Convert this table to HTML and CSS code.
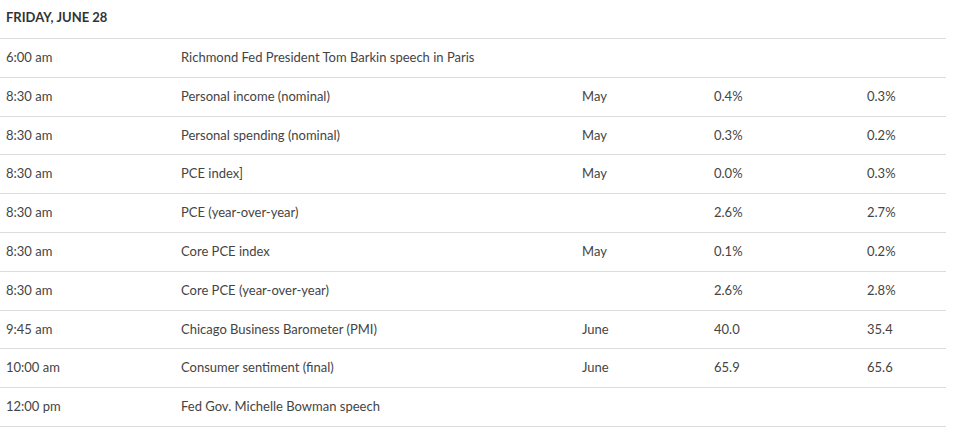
FILE: index.html
```html
<!DOCTYPE html>
<html>
<head>
<meta charset="utf-8">
<link rel="stylesheet" href="styles.css">
</head>
<body>
<div class="calendar">
  <div class="day">FRIDAY, JUNE 28</div>
  <table class="events">
    <tbody>
      <tr><td class="c-time">6:00 am</td><td class="c-event">Richmond Fed President Tom Barkin speech in Paris</td><td class="c-period"></td><td class="c-fc"></td><td class="c-prev"></td></tr>
      <tr><td class="c-time">8:30 am</td><td class="c-event">Personal income (nominal)</td><td class="c-period">May</td><td class="c-fc">0.4%</td><td class="c-prev">0.3%</td></tr>
      <tr><td class="c-time">8:30 am</td><td class="c-event">Personal spending (nominal)</td><td class="c-period">May</td><td class="c-fc">0.3%</td><td class="c-prev">0.2%</td></tr>
      <tr><td class="c-time">8:30 am</td><td class="c-event">PCE index]</td><td class="c-period">May</td><td class="c-fc">0.0%</td><td class="c-prev">0.3%</td></tr>
      <tr><td class="c-time">8:30 am</td><td class="c-event">PCE (year-over-year)</td><td class="c-period"></td><td class="c-fc">2.6%</td><td class="c-prev">2.7%</td></tr>
      <tr><td class="c-time">8:30 am</td><td class="c-event">Core PCE index</td><td class="c-period">May</td><td class="c-fc">0.1%</td><td class="c-prev">0.2%</td></tr>
      <tr><td class="c-time">8:30 am</td><td class="c-event">Core PCE (year-over-year)</td><td class="c-period"></td><td class="c-fc">2.6%</td><td class="c-prev">2.8%</td></tr>
      <tr><td class="c-time">9:45 am</td><td class="c-event">Chicago Business Barometer (PMI)</td><td class="c-period">June</td><td class="c-fc">40.0</td><td class="c-prev">35.4</td></tr>
      <tr><td class="c-time">10:00 am</td><td class="c-event">Consumer sentiment (final)</td><td class="c-period">June</td><td class="c-fc">65.9</td><td class="c-prev">65.6</td></tr>
      <tr><td class="c-time">12:00 pm</td><td class="c-event">Fed Gov. Michelle Bowman speech</td><td class="c-period"></td><td class="c-fc"></td><td class="c-prev"></td></tr>
    </tbody>
  </table>
</div>
</body>
</html>
```

FILE: styles.css
```css
html, body {
  margin: 0;
  padding: 0;
  background: #fff;
}
body {
  font-family: Lato, "Open Sans", sans-serif;
  font-size: 13px;
  color: #444;
}
.calendar {
  width: 946px;
}
.day {
  font-weight: 700;
  font-size: 13px;
  line-height: 17px;
  padding: 9px 6px 12px;
  height: 17px;
  border-bottom: 1px solid #ddd;
  color: #333;
}
.events {
  width: 946px;
  border-collapse: collapse;
  table-layout: fixed;
}
.events td {
  padding: 10px 6px 10px;
  line-height: 17.8px;
  border-bottom: 1px solid #ddd;
  white-space: nowrap;
  vertical-align: top;
}
.c-time { width: 163px; }
.c-event { width: 389px; }
.c-period { width: 120px; }
.c-fc { width: 141px; }
.c-prev { }
```
